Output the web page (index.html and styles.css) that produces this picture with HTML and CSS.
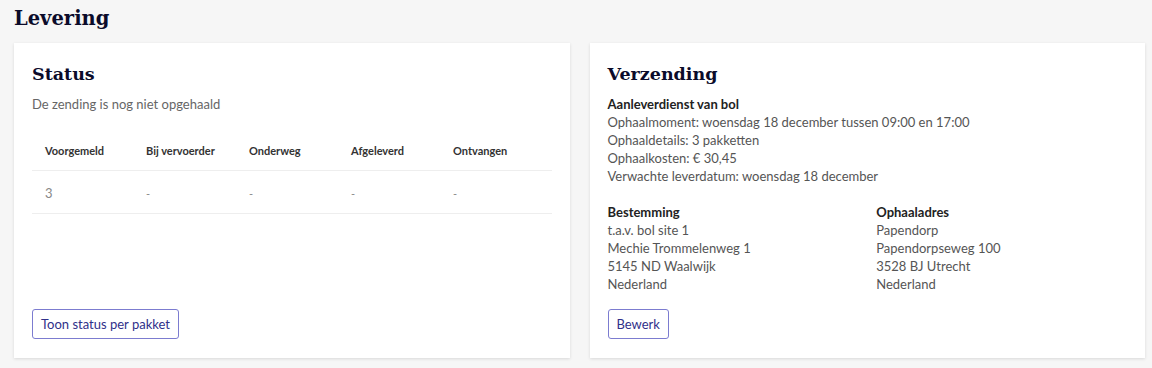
FILE: index.html
```html
<!DOCTYPE html>
<html lang="nl">
<head>
<meta charset="UTF-8" />
<title>Levering</title>
<link rel="stylesheet" href="styles.css">
</head>
<body>

<h1 class="page-title">Levering</h1>

<div class="cards">
  <div class="card card-status">
    <h2>Status</h2>
    <p class="muted">De zending is nog niet opgehaald</p>
    <table class="status-table">
      <thead>
        <tr>
          <th class="col-1">Voorgemeld</th>
          <th class="col-2">Bij vervoerder</th>
          <th class="col-3">Onderweg</th>
          <th class="col-4">Afgeleverd</th>
          <th>Ontvangen</th>
        </tr>
      </thead>
      <tbody>
        <tr>
          <td class="count">3</td>
          <td>-</td>
          <td>-</td>
          <td>-</td>
          <td>-</td>
        </tr>
      </tbody>
    </table>
    <button class="btn btn-bottom">Toon status per pakket</button>
  </div>

  <div class="card">
    <h2>Verzending</h2>
    <div class="block">
      <strong>Aanleverdienst van bol</strong>
      <div>Ophaalmoment: woensdag 18 december tussen 09:00 en 17:00</div>
      <div>Ophaaldetails: 3 pakketten</div>
      <div>Ophaalkosten: € 30,45</div>
      <div>Verwachte leverdatum: woensdag 18 december</div>
    </div>
    <div class="addresses">
      <div class="block">
        <strong>Bestemming</strong>
        <div>t.a.v. bol site 1</div>
        <div>Mechie Trommelenweg 1</div>
        <div>5145 ND Waalwijk</div>
        <div>Nederland</div>
      </div>
      <div class="block">
        <strong>Ophaaladres</strong>
        <div>Papendorp</div>
        <div>Papendorpseweg 100</div>
        <div>3528 BJ Utrecht</div>
        <div>Nederland</div>
      </div>
    </div>
    <button class="btn">Bewerk</button>
  </div>
</div>

</body>
</html>
```

FILE: styles.css
```css
body {
  font-family: Lato, "Liberation Sans", sans-serif;
  font-size: 13px;
  margin: 0;
  padding: 6px 7px 10px 14px;
  background: #f6f6f6;
  color: #555;
}

.page-title {
  font-family: "DejaVu Serif", serif;
  font-weight: 700;
  font-size: 19.5px;
  color: #0b0b2a;
  margin: 0 0 11px;
  line-height: 26px;
}

.cards {
  display: flex;
  gap: 20px;
  align-items: stretch;
}

.card {
  flex: 1;
  background: #fff;
  padding: 18px 18px 19px;
  box-shadow: 0 1px 3px rgba(0, 0, 0, 0.12);
  display: flex;
  flex-direction: column;
  align-items: flex-start;
}

.card h2 {
  font-family: "DejaVu Serif", serif;
  font-weight: 700;
  font-size: 17.5px;
  line-height: 26px;
  color: #0b0b2a;
  margin: 0 0 8px;
}

.muted {
  margin: 0 0 31px;
  color: #666;
  line-height: 18px;
}

.status-table {
  width: 100%;
  border-collapse: collapse;
}

.status-table th {
  text-align: left;
  font-size: 11px;
  font-weight: 700;
  color: #333;
  padding: 0 13px 13px;
  border-bottom: 1px solid #eee;
}

.status-table .col-1 { width: 101px; }
.status-table .col-2 { width: 103px; }
.status-table .col-3 { width: 102px; }
.status-table .col-4 { width: 102px; }

.status-table th[class] {
  box-sizing: border-box;
}

.status-table td {
  padding: 14px 13px 12px;
  color: #888;
  font-size: 11px;
  border-bottom: 1px solid #eee;
}

.status-table td.count {
  font-size: 13px;
}

.block {
  line-height: 18px;
  margin-bottom: 18px;
}

.block strong {
  display: block;
  font-weight: 700;
  color: #222;
}

.addresses {
  display: grid;
  grid-template-columns: 1fr 1fr;
  column-gap: 18px;
  width: 100%;
}

.addresses .block {
  margin-bottom: 16px;
}

.btn {
  font-family: inherit;
  font-size: 13px;
  background: #fff;
  color: #30308a;
  border: 1px solid #7c7cd0;
  border-radius: 3px;
  padding: 0 8px;
  height: 30px;
  cursor: pointer;
}

.btn-bottom {
  margin-top: auto;
}
```
